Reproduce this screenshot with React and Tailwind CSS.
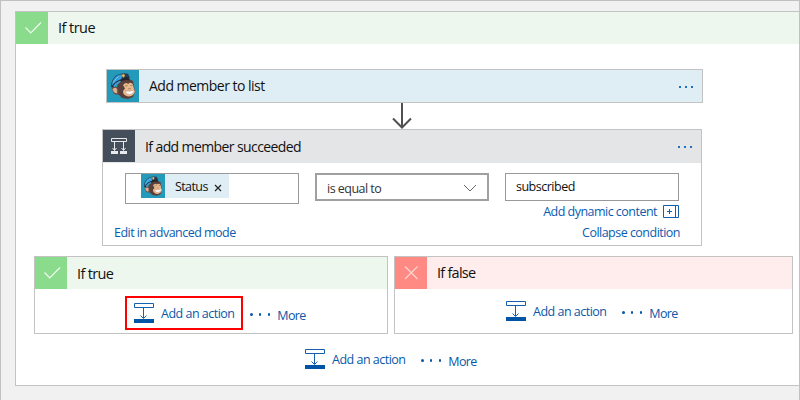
const Monkey = ({ className }) => (
  <svg viewBox="0 0 32 32" className={`shrink-0 ${className}`}>
    <rect width="32" height="32" fill="#239ab9" />
    <path d="M10 16 L13 11 L22 9 L26 11 L27 16 L28 22 L26 27 L21 29 L15 28 L11 24 Z" fill="#5b3f3b" />
    <path d="M4.500 18 Q8 15 11 18 L12 24 Q9 26 6.500 23 Z" fill="#6b4a42" />
    <path d="M5.500 19 Q9 16.500 10.200 19.500 L10.200 23 Q8 24 6.500 21.500 Z" fill="#dcae8e" />
    <path d="M16 15 Q19 11.500 21 14 Q24 11.500 26 14.500 L27 19 L28 22 Q26 26.500 21 26.500 Q15.500 25 16 21 L18 18.500 Z" fill="#e6b98f" />
    <path d="M18 16 L20.500 15.500 M23.500 15.500 L25.500 15.300" stroke="#9b6e57" strokeWidth=".8" />
    <path d="M21 18.700 L24 18.700" stroke="#b98260" strokeWidth=".9" />
    <path d="M18 21 Q23 22 27.300 19.800 Q26.500 24.500 22.500 24.500 Q19 24.500 18 21 Z" fill="#fff" stroke="#a87a60" strokeWidth=".4" />
    <path d="M4 17 Q4 9 10 5 Q16 2.500 21 3.800 L23 8 L12 12 L6 17.500 Z" fill="#2a3a52" />
    <path d="M4.800 15.500 Q5.500 8.500 10.500 5.500 Q13 4 15.500 4.600 L14.500 9 Q8 11 5 15.500 Z" fill="#2f9edb" />
    <path d="M6 13 Q8 8.500 12 6.500" fill="none" stroke="#6fc1ec" strokeWidth="1" />
    <path d="M5.500 16.500 Q8 12 14 10" fill="none" stroke="#22242c" strokeWidth=".9" />
    <path d="M13 10.500 Q17 6.500 21.500 7.500 L23 10.500 Q18 8.800 13 12 Z" fill="#22242c" />
    <path d="M6.800 16.500 Q9.500 12.800 13.500 11.300" fill="none" stroke="#3fa3d8" strokeWidth="1.600" />
    <path d="M15 4.800 L16.500 4 L18 5 L17 7.500 L15.500 7 Z" fill="#e4bd55" />
  </svg>
);

const Check = () => (
  <div className="h-8 w-8 shrink-0 bg-[#8adb8c]">
    <svg width="32" height="32" fill="none" stroke="#effaf0" strokeWidth="1.2">
      <path d="M9.500 15.500 L14.800 21 L25 10.500" />
    </svg>
  </div>
);

const Cross = () => (
  <div className="h-8 w-8 shrink-0 bg-[#ff8a84]">
    <svg width="32" height="32" fill="none" stroke="#ffd5d2" strokeWidth="1.2">
      <path d="M10 9.500 L22.500 22 M22.500 9.500 L10 22" />
    </svg>
  </div>
);

const MenuDots = ({ className }) => (
  <div className={`ml-auto flex gap-1 ${className}`}>
    <i className="h-0.5 w-0.5 bg-[#1d6fc0]" />
    <i className="h-0.5 w-0.5 bg-[#1d6fc0]" />
    <i className="h-0.5 w-0.5 bg-[#1d6fc0]" />
  </div>
);

const AddActions = ({ boxed = false }) => (
  <div className="flex text-[12.500px] leading-5 text-[#0a57a8]">
    <div className={boxed ? "flex h-[34px] w-[118px] border-2 border-[#fe0000] pl-[7px] pt-[5px]" : "flex h-[34px] w-[118px] pl-[9px] pt-[7px]"}>
      <svg width="20" height="20" className="shrink-0" fill="none" stroke="#1460ac">
        <path d="M.5 .5 H19.500 V4.500 H.5 Z M9.500 4.500 V15 M6.500 12.500 L9.500 15.500 L12.500 12.500" />
        <rect y="16" width="20" height="4" fill="#0054a6" stroke="none" />
      </svg>
      <span className="ml-[7px] mt-px whitespace-nowrap tracking-[-0.5px]">Add an action</span>
    </div>
    <div className="flex gap-[6.400px] pl-[7px] pt-[17px]">
      <i className="h-[2.500px] w-[2.500px] rounded-full bg-[#0a57a8]" />
      <i className="h-[2.500px] w-[2.500px] rounded-full bg-[#0a57a8]" />
      <i className="h-[2.500px] w-[2.500px] rounded-full bg-[#0a57a8]" />
    </div>
    <span className="ml-[7px] mt-[10px] tracking-[-0.6px]">More</span>
  </div>
);

export default function App() {
  return (
    <div className="h-[400px] w-[800px] overflow-hidden border-x border-t border-[#c1c1c1] bg-[#f1f1f1] pl-[14px] pt-[10px] font-['Open_Sans','Noto_Sans',sans-serif] text-[14.500px] text-[#111]">
      <div className="flex h-[375px] flex-col border-y border-l border-[#c3c3c3] bg-white">
        <div className="flex h-8 shrink-0 bg-[#edf7ee]">
          <Check />
          <span className="ml-[10px] leading-8 tracking-[-0.55px]">If true</span>
        </div>

        <div className="ml-[90px] mt-[25px] flex h-[34px] w-[597px] shrink-0 border border-[#c3c3c3] bg-[#dfeef5]">
          <Monkey className="h-8 w-8" />
          <span className="ml-[10px] text-[14px] leading-8 tracking-[-0.52px]">Add member to list</span>
          <MenuDots className="mr-[9px] mt-4" />
        </div>
        <svg width="20" height="26" className="ml-[376px] shrink-0" fill="none" stroke="#505050" strokeWidth="2">
          <path d="M10 0 V24 M1 15.500 L10 24.500 L19 15.500" />
        </svg>

        <div className="ml-[86px] flex h-[117px] w-[600px] shrink-0 flex-col border border-[#c3c3c3]">
          <div className="flex h-[33px] shrink-0 bg-[#e4e5e7]">
            <div className="h-8 w-8 shrink-0 bg-[#454e5b]">
              <svg width="32" height="32" fill="none" stroke="#e8eaec" strokeWidth="1">
                <path d="M8.500 8.500 H23.500 V11.500 H8.500 Z M11.500 12 V20 M20.500 12 V20 M9.500 18 L11.500 20.500 L13.500 18 M18.500 18 L20.500 20.500 L22.500 18" />
                <path d="M8 22.500 H15 M17 22.500 H24" strokeWidth="3" />
              </svg>
            </div>
            <span className="ml-[10px] text-[14px] leading-[33px] tracking-[-0.6px]">If add member succeeded</span>
            <MenuDots className="mr-[9px] mt-4" />
          </div>
          <div className="ml-[22px] mt-[10px] flex h-[31px] items-start gap-4 text-[12.500px]">
            <div className="flex h-[31px] w-[174px] border border-[#999] pl-[15px]">
              <div className="flex h-6 w-[88px] bg-[#dfeef5]">
                <Monkey className="h-6 w-6" />
                <span className="ml-[10px] leading-[26px] tracking-[-0.6px]">Status</span>
                <svg width="8" height="8" className="ml-[6px] mt-[10px]" stroke="#222" strokeWidth="1.200">
                  <path d="M1 1 L7 7 M7 1 L1 7" />
                </svg>
              </div>
            </div>
            <div className="flex h-7 w-[174px] border-2 border-[#a0a0a0] pl-[10px] text-[#333]">
              <span className="leading-[27px] tracking-[-0.52px]">is equal to</span>
              <svg width="14" height="8" className="ml-auto mr-[10px] mt-[9px]" fill="none" stroke="#666">
                <path d="M1 1 L7 7 L13 1" />
              </svg>
            </div>
            <div className="h-7 w-[174px] border border-[#999] pl-[10px] leading-[26px] tracking-[-0.5px]">subscribed</div>
          </div>
          <div className="mr-[21px] flex h-4 justify-end text-[12.500px] leading-4 text-[#0a5cb0]">
            <span className="tracking-[-0.52px]">Add dynamic content</span>
            <svg width="17" height="13" className="ml-[6px] mt-px" fill="none" stroke="#1460ac">
              <path d="M.5 .5 H15.500 V12.500 H.5 Z M12.500 .5 V12.500 M4 6.500 H9 M6.500 4 V9" />
            </svg>
          </div>
          <div className="ml-[11px] mr-[21px] mt-[5px] flex h-4 justify-between text-[12.500px] leading-4 tracking-[-0.52px] text-[#0a5cb0]">
            <span>Edit in advanced mode</span>
            <span>Collapse condition</span>
          </div>
        </div>

        <div className="ml-[18px] mt-[10px] flex shrink-0 gap-[6px]">
          <div className="h-[78px] w-[354px] border border-[#c3c3c3]">
            <div className="flex h-8 bg-[#edf7ee]">
              <Check />
              <span className="ml-[10px] leading-[34px] tracking-[-0.65px]">If true</span>
            </div>
            <div className="ml-[90px] mt-[7px]"><AddActions boxed /></div>
          </div>
          <div className="h-[78px] w-[399px] border border-[#c3c3c3]">
            <div className="flex h-8 bg-[#ffecec]">
              <Cross />
              <span className="ml-[10px] leading-8 tracking-[-0.75px]">If false</span>
            </div>
            <div className="ml-[102px] mt-[5px]"><AddActions /></div>
          </div>
        </div>
        <div className="ml-[280px] mt-2"><AddActions /></div>
      </div>
    </div>
  );
}
